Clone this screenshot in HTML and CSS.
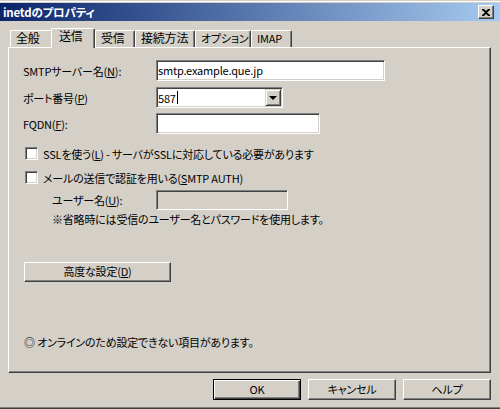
FILE: index.html
```html
<!DOCTYPE html>
<html lang="ja">
<head>
<meta charset="utf-8">
<link rel="stylesheet" href="styles.css">
</head>
<body>
<div class="window">
  <div class="titlebar">
    <span class="title">inetdのプロパティ</span>
    <span class="close"><svg width="8" height="7" viewBox="0 0 8 7"><path d="M0 0h2l2 2 2-2h2v1L5 3.5 8 6v1H6L4 5 2 7H0V6l3-2.5L0 1z" fill="#000"/></svg></span>
  </div>
  <div class="tabs">
    <div class="tab w1">全般</div>
    <div class="tab sel w2">送信</div>
    <div class="tab w3">受信</div>
    <div class="tab w4">接続方法</div>
    <div class="tab w5">オプション</div>
    <div class="tab w6">IMAP</div>
  </div>
  <div class="panel">
    <div class="row r1">
      <span class="lbl">SMTPサーバー名(<u>N</u>):</span>
      <span class="field f-smtp">smtp.example.que.jp</span>
    </div>
    <div class="row r2">
      <span class="lbl">ポート番号(<u>P</u>)</span>
      <span class="field combo"><span class="ctext">587<span class="caret"></span></span><span class="dd"><span class="tri"></span></span></span>
    </div>
    <div class="row r3">
      <span class="lbl">FQDN(<u>F</u>):</span>
      <span class="field f-fqdn"></span>
    </div>
    <div class="crow c1"><span class="cb"></span><span>SSLを使う(<u>L</u>) - サーバがSSLに対応している必要があります</span></div>
    <div class="crow c2"><span class="cb"></span><span>メールの送信で認証を用いる(<u>S</u>MTP AUTH)</span></div>
    <div class="row r4">
      <span class="lbl sub">ユーザー名(<u>U</u>):</span>
      <span class="field f-user disabled"></span>
    </div>
    <div class="note">※省略時には受信のユーザー名とパスワードを使用します。</div>
    <div class="btn adv">高度な設定(<u>D</u>)</div>
    <div class="info">◎ オンラインのため設定できない項目があります。</div>
  </div>
  <div class="buttons">
    <div class="btn bb default">OK</div>
    <div class="btn bb">キャンセル</div>
    <div class="btn bb">ヘルプ</div>
  </div>
</div>
</body>
</html>
```
FILE: styles.css
```css
html, body {
  margin: 0;
  padding: 0;
}
body {
  background: #d4d0c8;
  font-family: "Noto Sans CJK JP", sans-serif;
  font-size: 11px;
  letter-spacing: -0.2px;
  font-feature-settings: "palt";
  color: #000;
}
u { text-decoration: underline; text-underline-offset: 1px; }

.window {
  width: 500px;
  height: 409px;
  box-sizing: border-box;
  padding-top: 3px;
  background: linear-gradient(#d4d0c8 0 1px, #ffffff 1px 2px, #d4d0c8 2px);
  box-shadow: inset 0 -1px #404040, inset 0 -2px #808080;
  overflow: hidden;
}

.titlebar {
  height: 18px;
  display: flex;
  align-items: center;
  justify-content: space-between;
  padding: 0 6px 0 3px;
  background: linear-gradient(to right, #0a246a, #a6caf0);
}
.title {
  color: #fff;
  font-weight: bold;
  font-size: 11.5px;
  line-height: 14px;
}
.close {
  width: 16px;
  height: 14px;
  box-sizing: border-box;
  background: #d4d0c8;
  border-top: 1px solid #fff;
  border-left: 1px solid #fff;
  border-right: 1px solid #404040;
  border-bottom: 1px solid #404040;
  box-shadow: inset -1px -1px #808080;
  display: flex;
  align-items: center;
  justify-content: center;
}
.close svg { display: block; margin-left: -1px; }

.tabs {
  display: flex;
  align-items: flex-end;
  height: 19px;
  margin-top: 7px;
  padding-left: 10px;
}
.tab {
  height: 17px;
  box-sizing: border-box;
  border-top: 1px solid #fff;
  border-left: 1px solid #fff;
  border-right: 1px solid #404040;
  border-radius: 2px 2px 0 0;
  box-shadow: inset -1px 0 #808080;
  padding-left: 5px;
  line-height: 14px;
  font-size: 12px;
  white-space: nowrap;
  overflow: hidden;
}
.tab.sel {
  position: relative;
  z-index: 2;
  height: 20px;
  margin-bottom: -1px;
  margin-left: -2px;
  padding-left: 7px;
  background: #d4d0c8;
}
.w1 { width: 43px; }
.w2 { width: 44px; }
.w3 { width: 40px; }
.w4 { width: 60px; }
.w5 { width: 56px; }
.w6 { width: 41px; }
.w5, .w6 { font-size: 11px; }

.panel {
  position: relative;
  z-index: 1;
  margin-left: 8px;
  width: 483px;
  height: 326px;
  box-sizing: border-box;
  border-top: 1px solid #fff;
  border-left: 1px solid #fff;
  border-right: 1px solid #404040;
  border-bottom: 1px solid #404040;
  box-shadow: inset -1px -1px #808080;
  padding-left: 14px;
}

.row {
  display: flex;
  align-items: center;
  height: 21px;
}
.r1 { margin-top: 12px; }
.r2 { margin-top: 6px; }
.r3 { margin-top: 5px; }
.r4 { margin-top: 6px; height: 20px; }
.lbl {
  width: 133px;
  line-height: 14px;
  white-space: nowrap;
}
.lbl.sub {
  width: 104px;
  padding-left: 29px;
}

.field {
  height: 100%;
  box-sizing: border-box;
  background: #fff;
  border-top: 1px solid #808080;
  border-left: 1px solid #808080;
  border-right: 1px solid #fff;
  border-bottom: 1px solid #fff;
  box-shadow: inset 1px 1px #404040, inset -1px -1px #d4d0c8;
  padding-left: 1px;
  line-height: 18px;
  white-space: nowrap;
}
.f-smtp { width: 229px; }
.f-fqdn { width: 164px; }
.f-user { width: 132px; }
.field.disabled { background: #d4d0c8; }

.combo {
  width: 127px;
  display: flex;
  align-items: center;
  justify-content: space-between;
  padding-right: 1px;
}
.ctext {
  display: flex;
  align-items: center;
}
.caret {
  display: inline-block;
  width: 1px;
  height: 13px;
  background: #000;
  margin-left: 1px;
}
.dd {
  width: 16px;
  height: 17px;
  box-sizing: border-box;
  background: #d4d0c8;
  border-top: 1px solid #d4d0c8;
  border-left: 1px solid #d4d0c8;
  border-right: 1px solid #404040;
  border-bottom: 1px solid #404040;
  box-shadow: inset 1px 1px #fff, inset -1px -1px #808080;
  display: flex;
  align-items: center;
  justify-content: center;
}
.tri {
  width: 0;
  height: 0;
  border-left: 4px solid transparent;
  border-right: 4px solid transparent;
  border-top: 4px solid #000;
  margin-left: -1px;
}

.crow {
  display: flex;
  align-items: center;
  height: 13px;
  margin-left: 2px;
  gap: 5px;
  line-height: 14px;
  white-space: nowrap;
}
.c1 { margin-top: 13px; }
.c2 { margin-top: 11px; }
.cb {
  flex: none;
  width: 13px;
  height: 13px;
  box-sizing: border-box;
  background: #fff;
  border-top: 1px solid #808080;
  border-left: 1px solid #808080;
  border-right: 1px solid #fff;
  border-bottom: 1px solid #fff;
  box-shadow: inset 1px 1px #404040, inset -1px -1px #d4d0c8;
}

.note {
  margin-top: 1px;
  padding-left: 29px;
  line-height: 16px;
  white-space: nowrap;
}

.btn {
  box-sizing: border-box;
  background: #d4d0c8;
  border-top: 1px solid #fff;
  border-left: 1px solid #fff;
  border-right: 1px solid #404040;
  border-bottom: 1px solid #404040;
  box-shadow: inset -1px -1px #808080;
  text-align: center;
  white-space: nowrap;
}
.adv {
  margin-top: 35px;
  margin-left: 1px;
  width: 147px;
  height: 20px;
  line-height: 17px;
}
.info {
  margin-top: 53px;
  margin-left: 1px;
  line-height: 14px;
  white-space: nowrap;
}

.buttons {
  display: flex;
  justify-content: flex-end;
  gap: 7px;
  margin-top: 6px;
  padding-right: 9px;
}
.bb {
  width: 88px;
  height: 21px;
  line-height: 18px;
}
.btn.default {
  border: 1px solid #000;
  box-shadow: inset 1px 1px #fff, inset -1px -1px #404040, inset -2px -2px #808080;
}
```
